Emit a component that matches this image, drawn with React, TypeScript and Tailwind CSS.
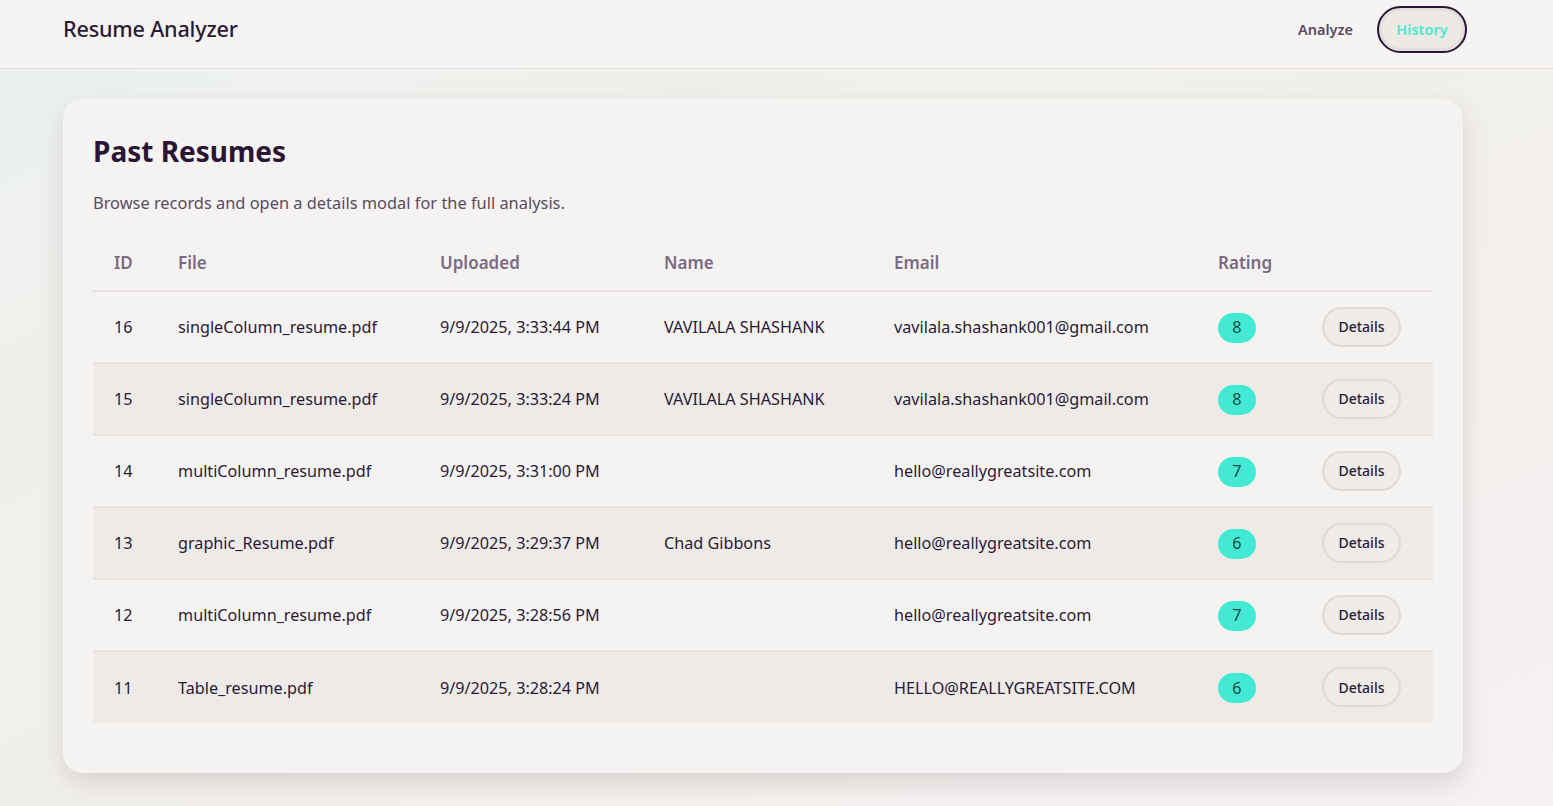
import React from "react";

const rows = [
  { id: 16, file: "singleColumn_resume.pdf", up: "9/9/2025, 3:33:44 PM", name: "VAVILALA SHASHANK", email: "vavilala.shashank001@gmail.com", rating: 8 },
  { id: 15, file: "singleColumn_resume.pdf", up: "9/9/2025, 3:33:24 PM", name: "VAVILALA SHASHANK", email: "vavilala.shashank001@gmail.com", rating: 8 },
  { id: 14, file: "multiColumn_resume.pdf", up: "9/9/2025, 3:31:00 PM", name: "", email: "hello@reallygreatsite.com", rating: 7 },
  { id: 13, file: "graphic_Resume.pdf", up: "9/9/2025, 3:29:37 PM", name: "Chad Gibbons", email: "hello@reallygreatsite.com", rating: 6 },
  { id: 12, file: "multiColumn_resume.pdf", up: "9/9/2025, 3:28:56 PM", name: "", email: "hello@reallygreatsite.com", rating: 7 },
  { id: 11, file: "Table_resume.pdf", up: "9/9/2025, 3:28:24 PM", name: "", email: "HELLO@REALLYGREATSITE.COM", rating: 6 },
];

export default function App() {
  return (
    <div
      className="min-h-[806px] w-full bg-gradient-to-br from-[#ecf1ed] via-[#f1efec] to-[#f5f1f1] text-[#2a1a35]"
      style={{ fontFamily: '"Noto Sans", "Open Sans", sans-serif' }}
    >
      <header className="h-[69px] border-b border-[#e6dfdd] bg-[#f6f4f2] flex items-start justify-between pl-[63px] pr-[86px] pt-[6px]">
        <div className="h-[47px] flex items-center text-[21.6px] font-medium text-[#2a1a35] tracking-[-0.2px]">Resume Analyzer</div>
        <nav className="flex items-center gap-[24px]">
          <span className="text-[14.5px] font-semibold text-[#5a4a62]">Analyze</span>
          <button className="h-[47px] w-[90px] rounded-full border-2 border-[#2a1535] bg-[#ede9e5] shadow-[inset_0_0_0_3px_#e3ded9] text-[14.5px] font-semibold text-[#4ce8cf]">
            History
          </button>
        </nav>
      </header>

      <main className="pl-[63px] pr-[90px] pt-[30px] pb-[34px]">
        <section className="rounded-[20px] bg-[#f5f3f1] shadow-[0_10px_24px_rgba(60,40,40,0.14)] px-[30px] pt-[30px] pb-[50px]">
          <h1 className="text-[28px] font-bold text-[#2a1535] leading-[44px]">Past Resumes</h1>
          <p className="mt-[18px] text-[16.4px] text-[#5a4a62]">Browse records and open a details modal for the full analysis.</p>
          <table className="mt-[17px] w-full border-collapse text-left">
            <thead>
              <tr className="h-[58px] border-b-2 border-[#e8e3e1]">
                <th className="pt-[4px] pl-[21px] w-[85px] text-[17px] font-semibold text-[#7a6a82]">ID</th>
                <th className="pt-[4px] w-[262px] text-[17px] font-semibold text-[#7a6a82]">File</th>
                <th className="pt-[4px] w-[224px] text-[17px] font-semibold text-[#7a6a82]">Uploaded</th>
                <th className="pt-[4px] w-[230px] text-[17px] font-semibold text-[#7a6a82]">Name</th>
                <th className="pt-[4px] w-[324px] text-[17px] font-semibold text-[#7a6a82]">Email</th>
                <th className="pt-[4px] w-[104px] text-[17px] font-semibold text-[#7a6a82]">Rating</th>
                <th></th>
              </tr>
            </thead>
            <tbody>
              {rows.map((r, i) => (
                <tr
                  key={r.id}
                  className={`h-[72px] text-[16.2px] text-[#2a1a35] ${i < rows.length - 1 ? "border-b-2 border-[#e8e3e1]" : ""} ${i % 2 === 1 ? "bg-[#eeeae7]" : ""}`}
                >
                  <td className="pt-[2px] pl-[21px]">{r.id}</td>
                  <td className="pt-[2px]">{r.file}</td>
                  <td className="pt-[2px]">{r.up}</td>
                  <td className="pt-[2px]">{r.name}</td>
                  <td className="pt-[2px]">{r.email}</td>
                  <td className="pt-[2px]">
                    <span className="inline-flex h-[30px] w-[38px] items-center justify-center rounded-full bg-[#44e9d3] text-[16.2px] text-[#1f4a48]">
                      {r.rating}
                    </span>
                  </td>
                  <td>
                    <button className="h-[40px] w-[79px] rounded-full border-2 border-[#dfdad6] bg-[#efebe8] text-[14px] font-medium text-[#2a1a35]">
                      Details
                    </button>
                  </td>
                </tr>
              ))}
            </tbody>
          </table>
        </section>
      </main>
    </div>
  );
}
